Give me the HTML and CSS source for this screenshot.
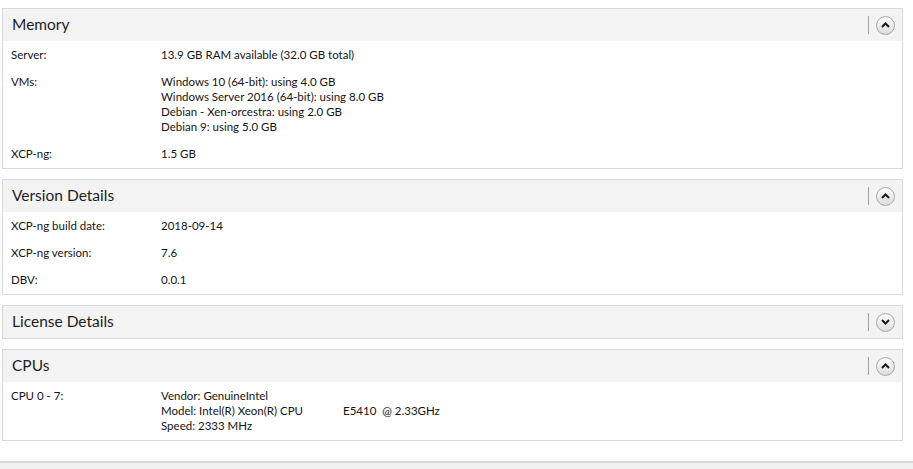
FILE: index.html
```html
<!DOCTYPE html>
<html lang="en">
<head>
    <meta charset="UTF-8">
    <title>General - XCP-ng</title>
    <link rel="stylesheet" href="styles.css">
</head>
<body>
    <div class="panels">
        <div class="panel">
            <div class="panel-header">
                <span class="panel-title">Memory</span>
                <span class="divider"></span>
                <button class="toggle up"><svg width="9" height="6" viewBox="0 0 9 6"><path d="M1 5 L4.5 1.5 L8 5" fill="none" stroke="#1a1a1a" stroke-width="2"/></svg></button>
            </div>
            <div class="panel-body">
                <div class="row"><div class="label">Server:</div><div class="value">13.9 GB RAM available (32.0 GB total)</div></div>
                <div class="row"><div class="label">VMs:</div><div class="value">Windows 10 (64-bit): using 4.0 GB<br>Windows Server 2016 (64-bit): using 8.0 GB<br>Debian - Xen-orcestra: using 2.0 GB<br>Debian 9: using 5.0 GB</div></div>
                <div class="row"><div class="label">XCP-ng:</div><div class="value">1.5 GB</div></div>
            </div>
        </div>

        <div class="panel">
            <div class="panel-header">
                <span class="panel-title">Version Details</span>
                <span class="divider"></span>
                <button class="toggle up"><svg width="9" height="6" viewBox="0 0 9 6"><path d="M1 5 L4.5 1.5 L8 5" fill="none" stroke="#1a1a1a" stroke-width="2"/></svg></button>
            </div>
            <div class="panel-body">
                <div class="row"><div class="label">XCP-ng build date:</div><div class="value">2018-09-14</div></div>
                <div class="row"><div class="label">XCP-ng version:</div><div class="value">7.6</div></div>
                <div class="row"><div class="label">DBV:</div><div class="value">0.0.1</div></div>
            </div>
        </div>

        <div class="panel">
            <div class="panel-header">
                <span class="panel-title">License Details</span>
                <span class="divider"></span>
                <button class="toggle"><svg width="9" height="6" viewBox="0 0 9 6"><path d="M1 1 L4.5 4.5 L8 1" fill="none" stroke="#1a1a1a" stroke-width="2"/></svg></button>
            </div>
        </div>

        <div class="panel">
            <div class="panel-header">
                <span class="panel-title">CPUs</span>
                <span class="divider"></span>
                <button class="toggle up"><svg width="9" height="6" viewBox="0 0 9 6"><path d="M1 5 L4.5 1.5 L8 5" fill="none" stroke="#1a1a1a" stroke-width="2"/></svg></button>
            </div>
            <div class="panel-body">
                <div class="row"><div class="label">CPU 0 - 7:</div><div class="value">Vendor: GenuineIntel<br>Model: Intel(R) Xeon(R) CPU<span class="pad"></span>E5410&nbsp;&nbsp;@ 2.33GHz<br>Speed: 2333 MHz</div></div>
            </div>
        </div>
    </div>
    <div class="next-panel"></div>
</body>
</html>
```

FILE: styles.css
```css
body {
    margin: 0;
    background: #fff;
    font-family: Lato, "Noto Sans", sans-serif;
    font-size: 11.5px;
    color: #141414;
}

.panels {
    display: flex;
    flex-direction: column;
    gap: 10px;
    padding: 8px 0 0 2px;
    width: 901px;
}

.panel {
    border: 1px solid #d9d9d9;
    background: #fff;
}

.panel-header {
    display: flex;
    align-items: center;
    height: 32px;
    padding: 0 7px 0 9px;
    background: #f3f3f3;
}

.panel-title {
    flex: 1;
    font-size: 15.5px;
    line-height: 18px;
    margin-top: -2px;
    color: #1e1e1e;
}

.divider {
    width: 1px;
    height: 18px;
    background: #a0a0a0;
    margin-right: 7px;
}

.toggle {
    width: 19px;
    height: 19px;
    padding: 0;
    border: 1px solid #a8a8a8;
    border-radius: 50%;
    background: linear-gradient(#fdfdfd, #dcdcdc);
    display: flex;
    align-items: center;
    justify-content: center;
}

.panel-body {
    display: flex;
    flex-direction: column;
    gap: 12px;
    padding: 6px 0 7px 8px;
}

.row {
    display: flex;
    line-height: 15px;
}

.label {
    width: 150px;
}

.pad {
    display: inline-block;
    width: 40px;
}

.next-panel {
    margin-top: 20px;
    border-top: 2px solid #d9d9d9;
    background: #f0f0f0;
    height: 10px;
}
```
